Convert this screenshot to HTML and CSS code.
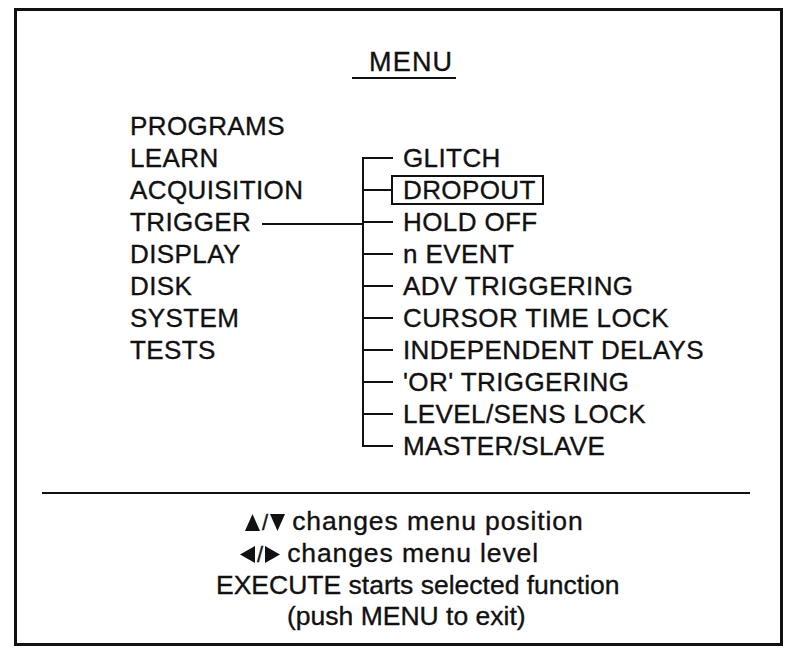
FILE: index.html
```html
<!DOCTYPE html>
<html>
<head>
<meta charset="utf-8">
<link rel="stylesheet" href="styles.css">
</head>
<body>
<div class="frame">
  <div class="title-row"><span class="title">MENU</span></div>
  <div class="menu">
    <div class="main r1">PROGRAMS</div>
    <div class="main r2">LEARN</div>
    <div class="main r3">ACQUISITION</div>
    <div class="main r4">TRIGGER</div>
    <div class="link r4"></div>
    <div class="main r5">DISPLAY</div>
    <div class="main r6">DISK</div>
    <div class="main r7">SYSTEM</div>
    <div class="main r8">TESTS</div>

    <div class="sub first r2"><span class="branch"></span><span class="label">GLITCH</span></div>
    <div class="sub r3"><span class="branch short"></span><span class="label selected">DROPOUT</span></div>
    <div class="sub r4"><span class="branch"></span><span class="label">HOLD OFF</span></div>
    <div class="sub r5"><span class="branch"></span><span class="label">n EVENT</span></div>
    <div class="sub r6"><span class="branch"></span><span class="label">ADV TRIGGERING</span></div>
    <div class="sub r7"><span class="branch"></span><span class="label">CURSOR TIME LOCK</span></div>
    <div class="sub r8"><span class="branch"></span><span class="label">INDEPENDENT DELAYS</span></div>
    <div class="sub r9"><span class="branch"></span><span class="label">'OR' TRIGGERING</span></div>
    <div class="sub r10"><span class="branch"></span><span class="label">LEVEL/SENS LOCK</span></div>
    <div class="sub last r11"><span class="branch"></span><span class="label">MASTER/SLAVE</span></div>
  </div>
  <div class="rule"></div>
  <div class="help">
    <div class="line l1"><svg class="tri" width="15" height="17" viewBox="0 0 15 17"><polygon points="7.5,0 15,17 0,17" fill="#111"/></svg><span class="slash">/</span><svg class="tri" width="15" height="17" viewBox="0 0 15 17"><polygon points="0,0 15,0 7.5,17" fill="#111"/></svg><span class="words">changes menu position</span></div>
    <div class="line l2"><svg class="tri" width="15" height="17" viewBox="0 0 15 17"><polygon points="0,8.5 15,0 15,17" fill="#111"/></svg><span class="slash">/</span><svg class="tri" width="15" height="17" viewBox="0 0 15 17"><polygon points="0,0 15,8.5 0,17" fill="#111"/></svg><span class="words">changes menu level</span></div>
    <div class="line l3">EXECUTE starts selected function</div>
    <div class="line l4">(push MENU to exit)</div>
  </div>
</div>
</body>
</html>
```
FILE: styles.css
```css
html, body {
  margin: 0;
  padding: 0;
  background: #fff;
}
body {
  font-family: "Liberation Sans", Arial, sans-serif;
  color: #111;
  -webkit-text-stroke: 0.35px #111;
}
.frame {
  box-sizing: border-box;
  margin: 8px 3px 0 14px;
  width: 769px;
  height: 638px;
  border: 3px solid #111;
}
.title-row {
  padding-top: 36px;
  padding-left: 335px;
  height: 44px;
}
.title {
  display: inline-block;
  font-size: 27px;
  letter-spacing: 1.2px;
  line-height: 30px;
  padding: 0 3px 0 17px;
  border-bottom: 2px solid #111;
}
.menu {
  display: grid;
  grid-template-columns: 132px 100px 1fr;
  grid-template-rows: repeat(11, 32px);
  margin-top: 19px;
  padding-left: 113px;
  font-size: 26px;
  letter-spacing: 0.4px;
}
.main {
  grid-column: 1;
  line-height: 32px;
  white-space: nowrap;
}
.link {
  grid-column: 2;
  height: 17px;
  border-bottom: 2px solid #111;
}
.sub {
  grid-column: 3;
  display: flex;
  align-items: center;
  height: 32px;
  white-space: nowrap;
}
.branch {
  align-self: stretch;
  width: 31px;
  flex: none;
  background-image: linear-gradient(#111, #111), linear-gradient(#111, #111);
  background-repeat: no-repeat;
  background-size: 100% 2px, 2px 100%;
  background-position: left 50%, left top;
}
.branch.short { width: 29px; }
.first .branch {
  background-size: 100% 2px, 2px 50%;
  background-position: left 50%, left bottom;
}
.last .branch {
  background-size: 100% 2px, 2px 50%;
  background-position: left 50%, left top;
}
.label {
  border: 2px solid transparent;
  padding: 0 8px 0 8px;
  line-height: 26px;
}
.branch.short + .label { padding-left: 10px; padding-right: 6px; }
.label.selected { border-color: #111; }
.r1 { grid-row: 1; }
.r2 { grid-row: 2; }
.r3 { grid-row: 3; }
.r4 { grid-row: 4; }
.r5 { grid-row: 5; }
.r6 { grid-row: 6; }
.r7 { grid-row: 7; }
.r8 { grid-row: 8; }
.r9 { grid-row: 9; }
.r10 { grid-row: 10; }
.r11 { grid-row: 11; }
.rule {
  margin: 30px 0 0 25px;
  width: 708px;
  height: 2px;
  background: #111;
}
.help {
  padding-top: 12px;
  font-size: 26.5px;
}
.line {
  line-height: 31px;
  white-space: nowrap;
}
.tri {
  vertical-align: -1px;
}
.slash {
  font-size: 22px;
  margin: 0 2px;
}
.words {
  margin-left: 7px;
  letter-spacing: 0.9px;
}
.l1 { padding-left: 228px; }
.l2 { padding-left: 223px; }
.l3 { padding-left: 199px; }
.l4 { padding-left: 270px; }
```
